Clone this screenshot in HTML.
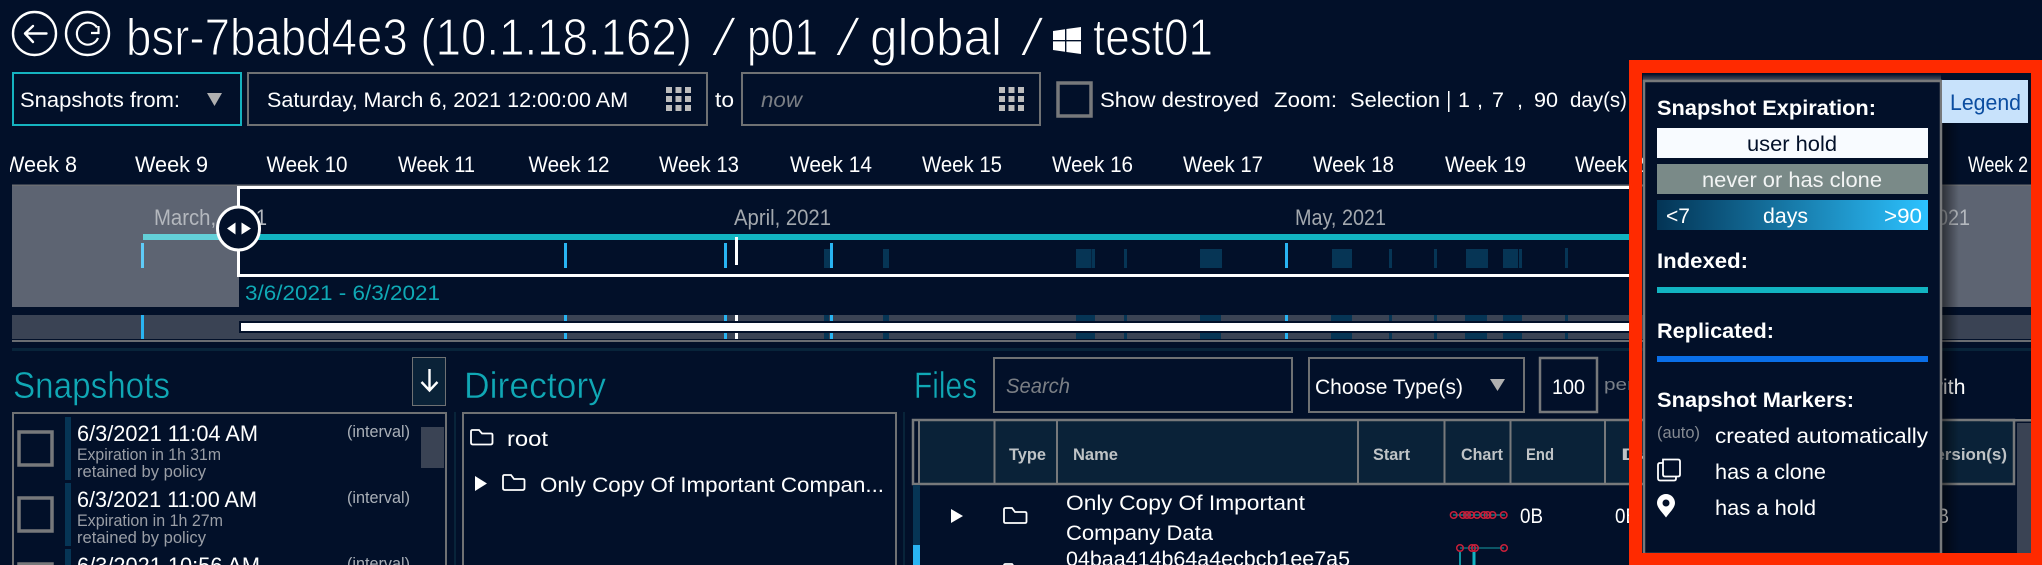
<!DOCTYPE html>
<html><head><meta charset="utf-8"><title>Snapshots</title>
<style>
html,body{margin:0;padding:0;background:#021029;width:2042px;height:565px;overflow:hidden}
body{position:relative}
svg{display:block}
text{font-family:"Liberation Sans",sans-serif;fill:#fff;white-space:pre}
.t{font-size:52px;stroke:#021029;stroke-width:1.1px;paint-order:fill}
.r{font-size:21.5px}
.w{font-size:22px}
.m{font-size:22px;fill:#b4b8be}
.h{font-size:37px;fill:#10a8b5;stroke:#021029;stroke-width:.5px}
.s{font-size:16.5px;fill:#9a9ea6}
.i{font-size:16.5px;fill:#aab0b8}
.b{font-size:16.5px;font-weight:bold;fill:#bfc3c6}
.l{font-size:21px;font-weight:bold}
.n{font-size:21px}
.box{fill:none;stroke:#6f7173;stroke-width:2}
#low{position:absolute;left:0;top:540px;width:1600px;height:25px;overflow:hidden}
</style></head><body>
<svg width="2042" height="565" viewBox="0 0 2042 565" xmlns="http://www.w3.org/2000/svg">
<defs>
<linearGradient id="gr"><stop offset="0" stop-color="#033455"/><stop offset="1" stop-color="#2cc2ff"/></linearGradient>
<linearGradient id="sh"><stop offset="0" stop-color="#000" stop-opacity=".55"/><stop offset="1" stop-color="#000" stop-opacity="0"/></linearGradient>
<linearGradient id="gl" x1="0" y1="0" x2="0" y2="1"><stop offset="0" stop-color="#021029"/><stop offset="1" stop-color="#565b66"/></linearGradient>
<clipPath id="wk"><rect x="10" y="140" width="2030" height="45"/></clipPath>
</defs>
<rect width="2042" height="565" fill="#021029"/>

<!-- title row -->
<g fill="none" stroke="#fff" stroke-width="2.4">
<circle cx="34.5" cy="33.5" r="21.5"/>
<circle cx="87.5" cy="33.5" r="21.5"/>
<path d="M25 33.5H46.5M33 26L25 33.5L33 42" stroke-linecap="round" stroke-linejoin="round"/>
<path d="M98 38A11 11 0 1 1 97 27.5" stroke-width="2.2"/>
<path d="M91 33H98.5V26" stroke-width="2.2"/>
</g>
<text class="t" x="126" y="55" textLength="566" lengthAdjust="spacingAndGlyphs">bsr-7babd4e3 (10.1.18.162)</text>
<text class="t" transform="translate(712 55) skewX(-14)">/</text>
<text class="t" x="747" y="55" textLength="71" lengthAdjust="spacingAndGlyphs">p01</text>
<text class="t" transform="translate(836 55) skewX(-14)">/</text>
<text class="t" x="870" y="55" textLength="132" lengthAdjust="spacingAndGlyphs">global</text>
<text class="t" transform="translate(1021 55) skewX(-12)">/</text>
<path fill="#fff" d="M1053 31L1065 29.2V40H1053ZM1066.4 29L1081 27V40H1066.4ZM1053 41.4H1065V51.8L1053 50ZM1066.4 41.4H1081V54L1066.4 52Z"/>
<text class="t" x="1093" y="55" textLength="120" lengthAdjust="spacingAndGlyphs">test01</text>

<!-- controls row -->
<rect x="13" y="73" width="228" height="52" fill="none" stroke="#15b3c0" stroke-width="2"/>
<text class="r" x="20" y="107" textLength="160" lengthAdjust="spacingAndGlyphs">Snapshots from:</text>
<path d="M207 93H222L214.5 106Z" fill="#b0b0b0"/>
<rect class="box" x="248" y="73" width="459" height="52"/>
<text class="r" x="267" y="107" textLength="361" lengthAdjust="spacingAndGlyphs">Saturday, March 6, 2021 12:00:00 AM</text>
<path fill="#bdbdbd" d="M666 87h6v6h-6zM675.5 87h6v6h-6zM685 87h6v6h-6zM666 96h6v6h-6zM675.5 96h6v6h-6zM685 96h6v6h-6zM666 105h6v6h-6zM675.5 105h6v6h-6zM685 105h6v6h-6z"/>
<text class="r" x="715" y="107" textLength="19" lengthAdjust="spacingAndGlyphs">to</text>
<rect class="box" x="742" y="73" width="298" height="52"/>
<text class="r" x="761" y="107" textLength="41" lengthAdjust="spacingAndGlyphs" style="font-style:italic;fill:#7b7f85">now</text>
<path fill="#bdbdbd" d="M999 87h6v6h-6zM1008.5 87h6v6h-6zM1018 87h6v6h-6zM999 96h6v6h-6zM1008.5 96h6v6h-6zM1018 96h6v6h-6zM999 105h6v6h-6zM1008.5 105h6v6h-6zM1018 105h6v6h-6z"/>
<rect x="1058" y="83" width="33" height="33" fill="none" stroke="#77797b" stroke-width="3.5"/>
<text class="r" x="1100" y="107" textLength="159" lengthAdjust="spacingAndGlyphs">Show destroyed</text>
<text class="r" x="1274" y="107" textLength="63" lengthAdjust="spacingAndGlyphs">Zoom:</text>
<text class="r" x="1350" y="107" textLength="90" lengthAdjust="spacingAndGlyphs">Selection</text>
<rect x="1448" y="91" width="1.5" height="21" fill="#fff"/>
<text class="r" x="1458" y="107">1</text>
<text class="r" x="1477" y="107">,</text>
<text class="r" x="1492" y="107" textLength="12" lengthAdjust="spacingAndGlyphs">7</text>
<text class="r" x="1517" y="107">,</text>
<text class="r" x="1534" y="107" textLength="24" lengthAdjust="spacingAndGlyphs">90</text>
<text class="r" x="1570" y="107" textLength="57" lengthAdjust="spacingAndGlyphs">day(s)</text>

<!-- weeks -->
<g clip-path="url(#wk)">
<text class="w" x="4" y="172" textLength="73" lengthAdjust="spacingAndGlyphs">Week 8</text>
<text class="w" x="135" y="172" textLength="73" lengthAdjust="spacingAndGlyphs">Week 9</text>
<text class="w" x="266.5" y="172" textLength="81" lengthAdjust="spacingAndGlyphs">Week 10</text>
<text class="w" x="398" y="172" textLength="77" lengthAdjust="spacingAndGlyphs">Week 11</text>
<text class="w" x="528.5" y="172" textLength="81" lengthAdjust="spacingAndGlyphs">Week 12</text>
<text class="w" x="659" y="172" textLength="80" lengthAdjust="spacingAndGlyphs">Week 13</text>
<text class="w" x="790" y="172" textLength="82" lengthAdjust="spacingAndGlyphs">Week 14</text>
<text class="w" x="922" y="172" textLength="80" lengthAdjust="spacingAndGlyphs">Week 15</text>
<text class="w" x="1052" y="172" textLength="81" lengthAdjust="spacingAndGlyphs">Week 16</text>
<text class="w" x="1183" y="172" textLength="80" lengthAdjust="spacingAndGlyphs">Week 17</text>
<text class="w" x="1313" y="172" textLength="81" lengthAdjust="spacingAndGlyphs">Week 18</text>
<text class="w" x="1445" y="172" textLength="81" lengthAdjust="spacingAndGlyphs">Week 19</text>
<text class="w" x="1575" y="172" textLength="81" lengthAdjust="spacingAndGlyphs">Week 20</text>
<text class="w" x="1968" y="172" textLength="60" lengthAdjust="spacingAndGlyphs">Week 2</text>
</g>

<!-- timeline -->
<rect x="12" y="184.5" width="2020" height="2" fill="#6a6d72"/>
<rect x="12" y="186" width="227" height="121" fill="#5d6472"/>
<rect x="1930" y="186" width="101" height="121" fill="#5d6472"/>
<text class="m" x="154" y="225" textLength="113" lengthAdjust="spacingAndGlyphs">March, 2021</text>
<text class="m" x="734" y="225" textLength="97" lengthAdjust="spacingAndGlyphs" style="fill:#a3a8ae">April, 2021</text>
<text class="m" x="1295" y="225" textLength="91" lengthAdjust="spacingAndGlyphs" style="fill:#a3a8ae">May, 2021</text>
<text class="m" x="1872" y="225" textLength="98" lengthAdjust="spacingAndGlyphs">June, 2021</text>
<rect x="143" y="234" width="96" height="6" fill="#63d0d8"/>
<rect x="239" y="234" width="1400" height="6" fill="#12b4c1"/>
<!-- dark blocks -->
<g fill="#063555">
<rect x="824" y="249" width="6" height="19"/><rect x="883" y="249" width="6" height="19"/>
<rect x="1076" y="249" width="15.5" height="19"/><rect x="1092" y="249" width="3" height="19"/>
<rect x="1124" y="249" width="3" height="19"/><rect x="1200" y="249" width="22" height="19"/>
<rect x="1332" y="249" width="20" height="19"/><rect x="1389" y="249" width="3" height="19"/>
<rect x="1434" y="249" width="3" height="19"/><rect x="1466" y="249" width="22" height="19"/>
<rect x="1503" y="249" width="15" height="19"/><rect x="1519" y="249" width="3" height="19"/>
<rect x="1565" y="248" width="3" height="20"/>
</g>
<rect x="141" y="243" width="3" height="25" fill="#5fcbf7"/>
<g fill="#29b4f2">
<rect x="564" y="243" width="3" height="25"/><rect x="724" y="243" width="3" height="25"/>
<rect x="830" y="243" width="3" height="25"/><rect x="1285" y="243" width="3" height="25"/>
</g>
<rect x="735" y="237" width="3" height="28" fill="#fff"/>
<!-- selection -->
<rect x="237" y="186" width="1400" height="3" fill="#fff"/>
<rect x="237" y="274" width="1400" height="3" fill="#fff"/>
<rect x="237" y="186" width="3" height="91" fill="#fff"/>
<ellipse cx="238.5" cy="228.5" rx="21" ry="21.5" fill="#021029" stroke="#fff" stroke-width="3"/>
<path fill="#fff" d="M235.5 222.5V234.5L227 228.5ZM241.5 222.5V234.5L251 228.5Z"/>
<text class="r" x="245" y="300" textLength="195" lengthAdjust="spacingAndGlyphs" style="fill:#0fa9b5">3/6/2021 - 6/3/2021</text>

<!-- mini bar -->
<rect x="12" y="315" width="2019" height="24" fill="#3a4354"/>
<g fill="#063555">
<rect x="824" y="315" width="5" height="24"/><rect x="883" y="315" width="6" height="24"/>
<rect x="1076" y="315" width="19" height="24"/><rect x="1124" y="315" width="3" height="24"/>
<rect x="1200" y="315" width="21" height="24"/><rect x="1331" y="315" width="21" height="24"/>
<rect x="1389" y="315" width="3" height="24"/><rect x="1434" y="315" width="3" height="24"/>
<rect x="1465" y="315" width="22" height="24"/><rect x="1503" y="315" width="19" height="24"/>
<rect x="1565" y="315" width="3" height="24"/>
</g>
<g fill="#29b4f2">
<rect x="141" y="315" width="3" height="24"/><rect x="564" y="315" width="3" height="24"/>
<rect x="724" y="315" width="3" height="24"/><rect x="830" y="315" width="3" height="24"/>
<rect x="1285" y="315" width="3" height="24"/>
</g>
<rect x="735" y="315" width="3" height="24" fill="#fff"/>
<rect x="239" y="321" width="1400" height="12" fill="#021029"/>
<rect x="241" y="323" width="1400" height="8" fill="#fff"/>
<rect x="12" y="340" width="2019" height="2" fill="#6a6d72"/>
<rect x="12" y="348" width="2019" height="3" fill="#08243a"/>

<!-- section headings -->
<text class="h" x="13" y="398" textLength="157" lengthAdjust="spacingAndGlyphs">Snapshots</text>
<text class="h" x="464" y="398" textLength="142" lengthAdjust="spacingAndGlyphs">Directory</text>
<text class="h" x="914" y="398" textLength="63" lengthAdjust="spacingAndGlyphs">Files</text>
<rect x="412.5" y="357.5" width="33" height="48" fill="#0a2238" stroke="#6f7173" stroke-width="1"/>
<path d="M429.5 369V390M421.5 382L429.5 390.5L437.5 382" fill="none" stroke="#fff" stroke-width="2.4"/>

<!-- snapshots list -->
<path class="box" d="M13 565V413H446V565" stroke-width="1.5"/>
<rect x="454" y="412" width="2" height="153" fill="#08243a"/>
<rect x="903" y="412" width="2" height="153" fill="#08243a"/>
<g fill="none" stroke="#77797b" stroke-width="3.5">
<rect x="19" y="432" width="33" height="33"/><rect x="19" y="498" width="33" height="33"/>
</g>
<g fill="#063555"><rect x="65" y="417" width="6" height="63"/><rect x="65" y="483" width="6" height="63"/><rect x="65" y="549" width="6" height="16"/></g>
<rect x="421" y="427" width="23" height="41" fill="#3a4354"/>
<text class="w" x="77" y="441" textLength="181" lengthAdjust="spacingAndGlyphs">6/3/2021 11:04 AM</text>
<text class="s" x="77" y="460" textLength="144" lengthAdjust="spacingAndGlyphs">Expiration in 1h 31m</text>
<text class="s" x="77" y="477" textLength="129" lengthAdjust="spacingAndGlyphs">retained by policy</text>
<text class="i" x="347" y="437" textLength="63" lengthAdjust="spacingAndGlyphs">(interval)</text>
<text class="w" x="77" y="507" textLength="180" lengthAdjust="spacingAndGlyphs">6/3/2021 11:00 AM</text>
<text class="s" x="77" y="526" textLength="146" lengthAdjust="spacingAndGlyphs">Expiration in 1h 27m</text>
<text class="s" x="77" y="543" textLength="129" lengthAdjust="spacingAndGlyphs">retained by policy</text>
<text class="i" x="347" y="503" textLength="63" lengthAdjust="spacingAndGlyphs">(interval)</text>

<!-- directory -->
<path class="box" d="M463 565V413H896V565" stroke-width="1.5"/>
<path d="M471 431.5Q471 430 472.5 430H479L482 433.5H491Q492.5 433.5 492.5 435V442.5Q492.5 444.5 490.5 444.5H473Q471 444.5 471 442.5Z" fill="none" stroke="#fff" stroke-width="1.8"/>
<text class="r" x="507" y="446" textLength="41" lengthAdjust="spacingAndGlyphs">root</text>
<path d="M475 476V491L487 483.5Z" fill="#fff"/>
<path d="M503 476.5Q503 475 504.5 475H511L514 479H523Q524.5 479 524.5 480.5V488Q524.5 490 522.5 490H505Q503 490 503 488Z" fill="none" stroke="#fff" stroke-width="1.8"/>
<text class="r" x="540" y="492" textLength="344" lengthAdjust="spacingAndGlyphs">Only Copy Of Important Compan...</text>

<!-- files controls -->
<rect class="box" x="994" y="358" width="298" height="54"/>
<text class="r" x="1006" y="393" textLength="64" lengthAdjust="spacingAndGlyphs" style="font-style:italic;fill:#7b7f85">Search</text>
<rect class="box" x="1309" y="358" width="215" height="54"/>
<text class="r" x="1315" y="394" textLength="148" lengthAdjust="spacingAndGlyphs">Choose Type(s)</text>
<path d="M1490 379H1505L1497.5 391Z" fill="#b0b0b0"/>
<rect x="1540" y="358" width="57" height="54" fill="none" stroke="#77797b" stroke-width="2.5"/>
<text class="r" x="1552" y="394" textLength="33" lengthAdjust="spacingAndGlyphs">100</text>
<text class="s" x="1604" y="390" textLength="30" lengthAdjust="spacingAndGlyphs" style="fill:#7a8088">per</text>
<text class="r" x="1927.5" y="394" textLength="38" lengthAdjust="spacingAndGlyphs">with</text>

<!-- table -->
<rect x="919" y="421" width="1095" height="62" fill="#0a2238"/>
<rect x="913" y="420" width="1101" height="64" fill="none" stroke="#77797b" stroke-width="2.5"/>
<g fill="#77797b">
<rect x="918" y="420" width="2" height="64"/><rect x="993.5" y="420" width="2" height="64"/>
<rect x="1056" y="420" width="2" height="64"/><rect x="1357" y="420" width="2" height="64"/>
<rect x="1443.5" y="420" width="2" height="64"/><rect x="1509.5" y="420" width="2" height="64"/>
<rect x="1604" y="420" width="2" height="64"/><rect x="1913" y="420" width="2" height="64"/>
</g>
<text class="b" x="1009" y="460" textLength="37" lengthAdjust="spacingAndGlyphs">Type</text>
<text class="b" x="1073" y="460" textLength="45" lengthAdjust="spacingAndGlyphs">Name</text>
<text class="b" x="1373" y="460" textLength="37" lengthAdjust="spacingAndGlyphs">Start</text>
<text class="b" x="1461" y="460" textLength="42" lengthAdjust="spacingAndGlyphs">Chart</text>
<text class="b" x="1526" y="460" textLength="28" lengthAdjust="spacingAndGlyphs">End</text>
<text class="b" x="1621" y="460" textLength="60" lengthAdjust="spacingAndGlyphs">Date</text>
<text class="b" x="1925" y="460" textLength="82" lengthAdjust="spacingAndGlyphs">Version(s)</text>
<rect x="2017" y="423" width="14" height="142" fill="#3a4354"/>
<rect x="1990" y="419" width="41" height="2.5" fill="#77797b"/>
<rect x="913" y="485" width="7" height="60" fill="#063555"/>
<rect x="913" y="545" width="7" height="20" fill="#29b4f2"/>
<path d="M951 509V523L963 516Z" fill="#fff"/>
<path d="M1004 509.5Q1004 508 1005.5 508H1012L1015 512H1025Q1026.5 512 1026.5 513.5V521.5Q1026.5 523 1025 523H1005.5Q1004 523 1004 521.5Z" fill="none" stroke="#fff" stroke-width="1.8"/>
<text class="r" x="1066" y="510" textLength="239" lengthAdjust="spacingAndGlyphs">Only Copy Of Important</text>
<text class="r" x="1066" y="540" textLength="147" lengthAdjust="spacingAndGlyphs">Company Data</text>
<!-- chart -->
<path d="M1453 515H1505" stroke="#12909c" stroke-width="1.2"/>
<path d="M1460 548H1504" stroke="#12808c" stroke-width="1.2"/>
<g fill="none" stroke="#c8203a" stroke-width="1.5">
<circle cx="1453.7" cy="515" r="3.3"/><circle cx="1463" cy="515" r="3.3"/><circle cx="1467" cy="515" r="3.3"/><circle cx="1471" cy="515" r="3.3"/>
<circle cx="1477" cy="515" r="3.3"/><circle cx="1484" cy="515" r="3.3"/><circle cx="1487.500" cy="515" r="3.3"/><circle cx="1492.500" cy="515" r="3.3"/>
<circle cx="1503.700" cy="515" r="3.3"/>
</g>
<g fill="none" stroke="#c8203a" stroke-width="1.5">
<circle cx="1460" cy="548" r="3.300"/><circle cx="1472" cy="548" r="3.300"/><circle cx="1475" cy="548" r="3.300"/><circle cx="1504" cy="548" r="3.300"/>
</g>
<path d="M1460 552V565" stroke="#12a0ad" stroke-width="1.800"/>
<path d="M1474 552V565" stroke="#12b4c1" stroke-width="3"/>
<text class="r" x="1520" y="523" textLength="23" lengthAdjust="spacingAndGlyphs">0B</text>
<text class="r" x="1615" y="523" textLength="23" lengthAdjust="spacingAndGlyphs">0B</text>
<text class="r" x="1928" y="523" textLength="21" lengthAdjust="spacingAndGlyphs">0B</text>

<!-- legend overlay -->
<rect x="1941" y="80" width="18" height="473" fill="url(#sh)"/>
<rect x="1642" y="73" width="389" height="7" fill="#021029"/>
<rect x="1643" y="74" width="298" height="7" fill="url(#gl)"/>
<rect x="1644" y="81" width="297" height="473" fill="#021029" stroke="#77797b" stroke-width="2.5"/>
<rect x="1942" y="80" width="86" height="43" fill="#c8e2fb"/>
<text class="w" x="1950" y="110" textLength="71" lengthAdjust="spacingAndGlyphs" style="fill:#0b4da0">Legend</text>
<text class="l" x="1657" y="115" textLength="219" lengthAdjust="spacingAndGlyphs">Snapshot Expiration:</text>
<rect x="1657" y="128" width="271" height="30" fill="#f8fbff"/>
<text class="n" x="1747" y="151" textLength="90" lengthAdjust="spacingAndGlyphs" style="fill:#021029">user hold</text>
<rect x="1657" y="164" width="271" height="30" fill="#7a8a88"/>
<text class="n" x="1702" y="187" textLength="180" lengthAdjust="spacingAndGlyphs" style="fill:#f2f4f4">never or has clone</text>
<rect x="1657" y="200" width="271" height="30" fill="url(#gr)"/>
<text class="n" x="1666" y="223" textLength="24" lengthAdjust="spacingAndGlyphs">&lt;7</text>
<text class="n" x="1763" y="223" textLength="45" lengthAdjust="spacingAndGlyphs">days</text>
<text class="n" x="1884" y="223" textLength="38" lengthAdjust="spacingAndGlyphs">&gt;90</text>
<text class="l" x="1657" y="268" textLength="91" lengthAdjust="spacingAndGlyphs">Indexed:</text>
<rect x="1657" y="287" width="271" height="6" fill="#12b4c1"/>
<text class="l" x="1657" y="338" textLength="117" lengthAdjust="spacingAndGlyphs">Replicated:</text>
<rect x="1657" y="356" width="271" height="6" fill="#0a6fe8"/>
<text class="l" x="1657" y="407" textLength="197" lengthAdjust="spacingAndGlyphs">Snapshot Markers:</text>
<text class="s" x="1657" y="438" textLength="43" lengthAdjust="spacingAndGlyphs" style="fill:#858a92">(auto)</text>
<text class="n" x="1715" y="443" textLength="213" lengthAdjust="spacingAndGlyphs">created automatically</text>
<path d="M1663 459.5H1678Q1680 459.5 1680 461.5V474.5Q1680 476.5 1678 476.5H1665Q1663 476.5 1663 474.5ZM1663 463H1660Q1658 463 1658 465V478Q1658 480.5 1660 480.5H1674Q1676 480.5 1676 478.5V476.5" fill="none" stroke="#fff" stroke-width="1.8"/>
<text class="n" x="1715" y="479" textLength="111" lengthAdjust="spacingAndGlyphs">has a clone</text>
<path fill="#fff" fill-rule="evenodd" d="M1666 494C1661 494 1657 498 1657 503C1657 508 1663 513 1666 517.5C1669 513 1675 508 1675 503C1675 498 1671 494 1666 494ZM1666 499.5A3.5 3.5 0 1 1 1666 506.5A3.5 3.5 0 1 1 1666 499.5Z"/>
<text class="n" x="1715" y="515" textLength="101" lengthAdjust="spacingAndGlyphs">has a hold</text>

<!-- red highlight frame -->
<path fill="#ff2a00" fill-rule="evenodd" d="M1629 60H2042V565H1629ZM1642 73V553H2031V73Z"/>
</svg>

<!-- row cut off by the bottom of the viewport -->
<div id="low">
<svg width="1600" height="40" viewBox="0 540 1600 40" xmlns="http://www.w3.org/2000/svg">
<rect x="19" y="564" width="33" height="33" fill="none" stroke="#77797b" stroke-width="3.5"/>
<text class="w" x="77" y="573" textLength="183" lengthAdjust="spacingAndGlyphs">6/3/2021 10:56 AM</text>
<text class="i" x="347" y="569" textLength="63" lengthAdjust="spacingAndGlyphs">(interval)</text>
<path d="M1004 574V565.5Q1004 564 1005.5 564H1012L1015 568H1025" fill="none" stroke="#fff" stroke-width="1.8"/>
<text class="r" x="1066" y="566" textLength="284" lengthAdjust="spacingAndGlyphs">04baa414b64a4ecbcb1ee7a5</text>
</svg>
</div>
</body></html>
